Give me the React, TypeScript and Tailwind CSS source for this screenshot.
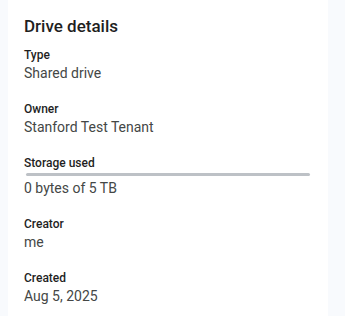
import React from 'react';

const rows = [
    { label: 'Type', value: 'Shared drive' },
    { label: 'Owner', value: 'Stanford Test Tenant' },
];

const rowsAfter = [
    { label: 'Creator', value: 'me' },
    { label: 'Created', value: 'Aug 5, 2025' },
];

const Field: React.FC<{ label: string; value: string; children?: React.ReactNode }> = ({ label, value, children }) => (
    <div className="flex flex-col">
        <span className="text-[12px] leading-4 font-medium text-[#1f1f1f]">{label}</span>
        {children}
        <span className="text-[14px] leading-5 text-[#444746]">{value}</span>
    </div>
);

export default function App() {
    return (
        <div
            className="w-[345px] h-[316px] bg-[#f8fafd] flex overflow-hidden"
            style={{ fontFamily: 'Roboto, "Noto Sans", sans-serif' }}
        >
            <div className="ml-[8px] w-[320px] h-full bg-white px-4 pt-[14px]">
                <h2 className="text-[17px] leading-6 font-medium text-[#1f1f1f]">Drive details</h2>
                <div className="mt-[9px] flex flex-col gap-[18px]">
                    {rows.map((r) => (
                        <Field key={r.label} label={r.label} value={r.value} />
                    ))}
                    {/* storage */}
                    <Field label="Storage used" value="0 bytes of 5 TB">
                        <div className="mt-[2px] mb-[2px] mx-[2px] h-[3px] rounded-full bg-[#bdc1c6]" />
                    </Field>
                    {rowsAfter.map((r) => (
                        <Field key={r.label} label={r.label} value={r.value} />
                    ))}
                </div>
            </div>
        </div>
    );
}
